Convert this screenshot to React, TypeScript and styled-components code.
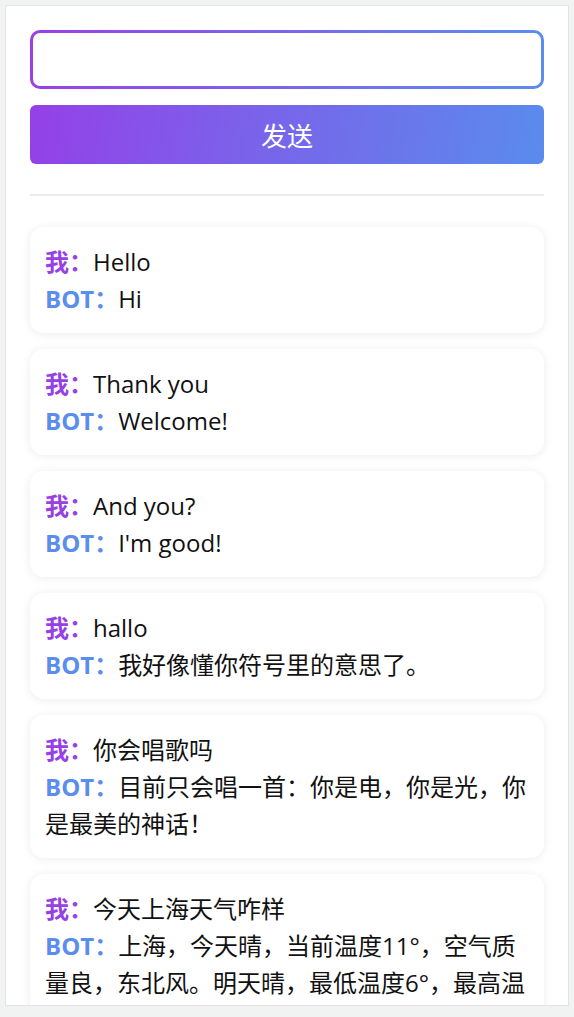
import React from "react";
import styled, { createGlobalStyle } from "styled-components";

const GlobalStyle = createGlobalStyle`
  html, body { margin: 0; padding: 0; }
  body {
    background: #f1f2f2;
    font-family: "Open Sans", "Noto Sans CJK SC", sans-serif;
  }
  * { box-sizing: border-box; }
`;

const Page = styled.div`
  padding: 5px;
`;

const Panel = styled.div`
  height: 1001px;
  overflow: hidden;
  background: #ffffff;
  border: 1px solid #e2e3e3;
  padding: 24px;
`;

const Input = styled.input`
  display: block;
  width: 100%;
  height: 59px;
  border: 3px solid transparent;
  border-radius: 10px;
  background: linear-gradient(#fff, #fff) padding-box,
    linear-gradient(90deg, #9b3fe6, #5a8ded) border-box;
  outline: none;
  font-size: 24px;
  padding: 0 14px;
  font-family: inherit;
`;

const SendButton = styled.button`
  display: block;
  margin-top: 16px;
  height: 59px;
  width: 100%;
  border: none;
  border-radius: 6px;
  background: linear-gradient(100deg, #9440e8 0%, #7c60ea 40%, #5a8bec 100%);
  color: #ffffff;
  font-size: 26px;
  font-family: "Noto Sans CJK SC", sans-serif;
  cursor: pointer;
`;

const Divider = styled.hr`
  border: none;
  height: 2px;
  background: #ececec;
  margin: 30px 0 31px;
`;

const List = styled.div`
  display: flex;
  flex-direction: column;
  gap: 16px;
`;

const Card = styled.div`
  background: #fff;
  border-radius: 14px;
  box-shadow: 0 1px 10px rgba(0, 0, 0, 0.08);
  padding: 16px 15px;
  font-size: 24px;
  line-height: 37px;
  color: #111;
`;

const Line = styled.div``;

const Label = styled.span<{ $who: "me" | "bot" }>`
  font-weight: 700;
  color: ${(p) => (p.$who === "me" ? "#9640e6" : "#5b8def")};
`;

const messages = [
  { q: "Hello", a: "Hi" },
  { q: "Thank you", a: "Welcome!" },
  { q: "And you?", a: "I'm good!" },
  { q: "hallo", a: "我好像懂你符号里的意思了。" },
  { q: "你会唱歌吗", a: "目前只会唱一首：你是电，你是光，你是最美的神话！" },
  {
    q: "今天上海天气咋样",
    a: "上海，今天晴，当前温度11°，空气质量良，东北风。明天晴，最低温度6°，最高温度15°。",
  },
];

export default function App() {
  return (
    <>
      <GlobalStyle />
      <Page>
        <Panel>
          <Input />
          <SendButton>发送</SendButton>
          <Divider />
          <List>
            {messages.map((m, i) => (
              <Card key={i}>
                <Line>
                  <Label $who="me">我：</Label>
                  {m.q}
                </Line>
                <Line>
                  <Label $who="bot">BOT：</Label>
                  {m.a}
                </Line>
              </Card>
            ))}
          </List>
        </Panel>
      </Page>
    </>
  );
}
